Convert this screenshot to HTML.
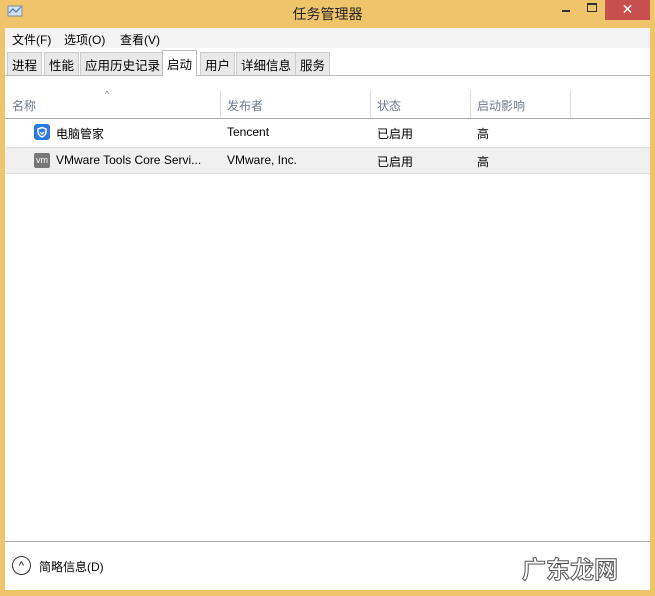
<!DOCTYPE html><html><head><meta charset="utf-8"><style>
*{margin:0;padding:0;box-sizing:border-box}
body{width:655px;height:596px;background:#efc46b;font-family:"Liberation Sans","Noto Sans CJK SC",sans-serif;font-size:12px;color:#000;position:relative;overflow:hidden}
.a{position:absolute}
.title{left:0;top:4px;width:655px;text-align:center;font-size:14px;color:#222}
.win{left:5px;top:28px;width:645px;height:562px;background:#fff}
.menu{left:5px;top:28px;width:645px;height:20px;background:#f3f3f3}
.menu span{position:absolute;top:3px}
.tab{top:52px;height:23px;border:1px solid #ccc;border-bottom:none;background:#e9e9e9;padding:2px 4px 0;font-size:12.5px}
.tab.act{background:#fff;top:50px;height:26px;border-color:#bbb;padding-top:3px}
.hd{color:#6d7a8d;font-size:12px;top:97px}
.sep{top:90px;width:1px;height:28px;background:#ddd}
</style></head><body>
<div class="a title">任务管理器</div>
<svg class="a" style="left:7px;top:4px" width="16" height="14"><rect x="1" y="2" width="14" height="10" fill="#cfe0ee" stroke="#7a8fa3"/><polyline points="2,9 6,5 9,8 14,3" fill="none" stroke="#4a79b0" stroke-width="1.2"/></svg>
<div class="a" style="left:562px;top:10px;width:8px;height:2px;background:#333"></div>
<div class="a" style="left:587px;top:3px;width:10px;height:9px;border:1px solid #333;border-top-width:2px"></div>
<div class="a" style="left:605px;top:0;width:45px;height:20px;background:#c7504f;color:#fff;text-align:center;font-size:14px;line-height:19px">✕</div>
<div class="a win"></div>
<div class="a menu"><span style="left:7px">文件(F)</span><span style="left:59px">选项(O)</span><span style="left:115px">查看(V)</span></div>
<div class="a" style="left:5px;top:75px;width:645px;height:1px;background:#bbb"></div>
<div class="a tab" style="left:7px">进程</div>
<div class="a tab" style="left:44px">性能</div>
<div class="a tab" style="left:80px">应用历史记录</div>
<div class="a tab act" style="left:162px">启动</div>
<div class="a tab" style="left:200px">用户</div>
<div class="a tab" style="left:236px">详细信息</div>
<div class="a tab" style="left:295px">服务</div>
<div class="a" style="left:105px;top:89px;font-size:9px;color:#6d7a8d">^</div>
<div class="a hd" style="left:12px">名称</div>
<div class="a hd" style="left:227px">发布者</div>
<div class="a hd" style="left:377px">状态</div>
<div class="a hd" style="left:477px">启动影响</div>
<div class="a sep" style="left:220px"></div><div class="a sep" style="left:370px"></div><div class="a sep" style="left:470px"></div><div class="a sep" style="left:570px"></div>
<div class="a" style="left:5px;top:118px;width:645px;height:1px;background:#aaa"></div>
<div class="a" style="left:5px;top:147px;width:645px;height:27px;background:#f0f0f0;border-top:1px solid #ddd;border-bottom:1px solid #ddd"></div>
<svg class="a" style="left:34px;top:124px" width="16" height="16"><rect width="16" height="16" rx="3" fill="#2a7ae2"/><path d="M4 5 L8 3.5 L12 5 L12 8 Q12 11 8 13 Q4 11 4 8Z" fill="none" stroke="#fff" stroke-width="1.5"/><path d="M6 8 L8 10 L10 8" fill="none" stroke="#fff" stroke-width="1.3"/></svg>
<div class="a" style="left:56px;top:125px">电脑管家</div>
<div class="a" style="left:227px;top:125px">Tencent</div>
<div class="a" style="left:377px;top:125px">已启用</div>
<div class="a" style="left:477px;top:125px">高</div>
<div class="a" style="left:34px;top:153px;width:16px;height:15px;background:#777;color:#fff;font-size:9px;line-height:15px;text-align:center;border-radius:2px">vm</div>
<div class="a" style="left:56px;top:153px">VMware Tools Core Servi...</div>
<div class="a" style="left:227px;top:153px">VMware, Inc.</div>
<div class="a" style="left:377px;top:153px">已启用</div>
<div class="a" style="left:477px;top:153px">高</div>
<div class="a" style="left:5px;top:541px;width:645px;height:1px;background:#aaa"></div>
<div class="a" style="left:12px;top:556px;width:19px;height:19px;border:1px solid #333;border-radius:50%;text-align:center;font-size:11px;line-height:19px">^</div>
<div class="a" style="left:39px;top:558px">简略信息(D)</div>
<div class="a" style="left:522px;top:550px;font-size:24px;font-weight:bold;color:#fff;-webkit-text-stroke:1px #555">广东龙网</div>
</body></html>
